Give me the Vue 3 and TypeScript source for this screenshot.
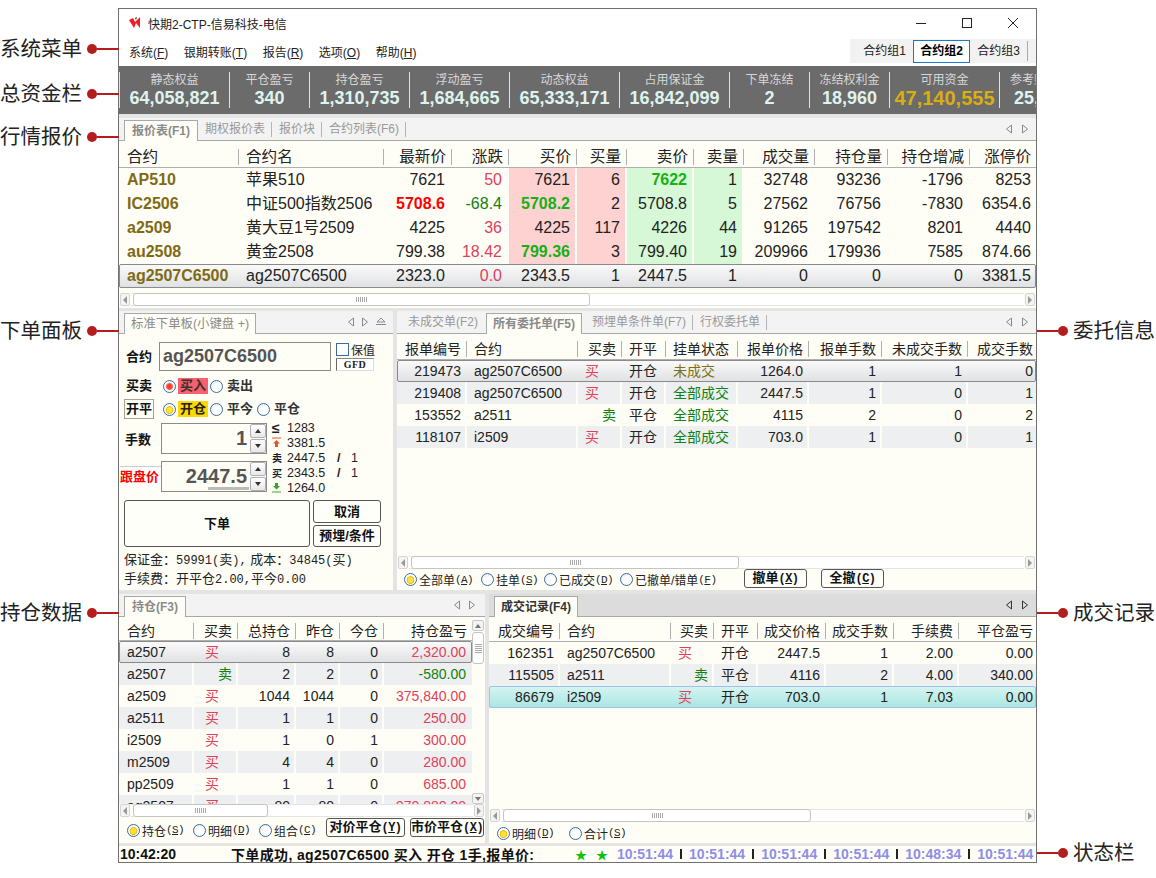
<script setup lang="ts">
type Cell = string | [string, string];

interface Col {
  title: string;
  w: number;
  left?: boolean;
}

interface GridRow {
  cells: Cell[];
  cls?: string;
}

function gridCols(cols: Col[]) {
  return cols.map((c) => c.w + "px").join(" ");
}

function text(c: Cell) {
  return typeof c === "string" ? c : c[0];
}

function cellClass(c: Cell, col: Col) {
  const own = typeof c === "string" ? "" : c[1];
  return [col.left ? "left" : "", own];
}

const callouts = [
  { label: "系统菜单", y: 49, side: "left" },
  { label: "总资金栏", y: 94, side: "left" },
  { label: "行情报价", y: 137, side: "left" },
  { label: "下单面板", y: 331, side: "left" },
  { label: "持仓数据", y: 613, side: "left" },
  { label: "委托信息", y: 331, side: "right" },
  { label: "成交记录", y: 613, side: "right" },
  { label: "状态栏", y: 853, side: "right" },
];

const menus = [
  { name: "系统", key: "F" },
  { name: "银期转账", key: "T" },
  { name: "报告", key: "R" },
  { name: "选项", key: "O" },
  { name: "帮助", key: "H" },
];

const funds = [
  { label: "静态权益", value: "64,058,821", w: 110 },
  { label: "平仓盈亏", value: "340", w: 80 },
  { label: "持仓盈亏", value: "1,310,735", w: 100 },
  { label: "浮动盈亏", value: "1,684,665", w: 100 },
  { label: "动态权益", value: "65,333,171", w: 110 },
  { label: "占用保证金", value: "16,842,099", w: 110 },
  { label: "下单冻结", value: "2", w: 80 },
  { label: "冻结权利金", value: "18,960", w: 80 },
  { label: "可用资金", value: "47,140,555", w: 110, gold: true },
];

const quoteCols: Col[] = [
  { title: "合约", w: 120, left: true },
  { title: "合约名", w: 145, left: true },
  { title: "最新价", w: 68 },
  { title: "涨跌", w: 57 },
  { title: "买价", w: 68 },
  { title: "买量", w: 50 },
  { title: "卖价", w: 67 },
  { title: "卖量", w: 50 },
  { title: "成交量", w: 71 },
  { title: "持仓量", w: 73 },
  { title: "持仓增减", w: 82 },
  { title: "涨停价", w: 66 },
];

function quote(
  code: string,
  name: string,
  last: Cell,
  chg: Cell,
  bid: Cell,
  bidVol: string,
  ask: Cell,
  askVol: string,
  ...rest: string[]
): Cell[] {
  const tag = (c: Cell, k: string): Cell => (typeof c === "string" ? [c, k] : [c[0], c[1] + " " + k]);
  return [[code, "code"], name, last, chg, tag(bid, "bid"), tag(bidVol, "bid"), tag(ask, "ask"), tag(askVol, "ask"), ...rest];
}

const quoteRows: GridRow[] = [
  { cells: quote("AP510", "苹果510", "7621", ["50", "up"], "7621", "6", ["7622", "hi-green"], "1", "32748", "93236", "-1796", "8253") },
  { cells: quote("IC2506", "中证500指数2506", ["5708.6", "hi-red"], ["-68.4", "down"], ["5708.2", "hi-green"], "2", "5708.8", "5", "27562", "76756", "-7830", "6354.6") },
  { cells: quote("a2509", "黄大豆1号2509", "4225", ["36", "up"], "4225", "117", "4226", "44", "91265", "197542", "8201", "4440") },
  { cells: quote("au2508", "黄金2508", "799.38", ["18.42", "up"], ["799.36", "hi-green"], "3", "799.40", "19", "209966", "179936", "7585", "874.66") },
  { cells: quote("ag2507C6500", "ag2507C6500", "2323.0", ["0.0", "up"], "2343.5", "1", "2447.5", "1", "0", "0", "0", "3381.5"), cls: "sel" },
];

const BUY: Cell = ["买", "left up"];
const SELL: Cell = ["卖", "down"];

const orderCols: Col[] = [
  { title: "报单编号", w: 70 },
  { title: "合约", w: 111, left: true },
  { title: "买卖", w: 44 },
  { title: "开平", w: 44, left: true },
  { title: "挂单状态", w: 72, left: true },
  { title: "报单价格", w: 71 },
  { title: "报单手数", w: 73 },
  { title: "未成交手数", w: 86 },
  { title: "成交手数", w: 68 },
];

const DONE: Cell = ["全部成交", "filled"];

const orderRows: GridRow[] = [
  { cells: ["219473", "ag2507C6500", BUY, "开仓", ["未成交", "pending"], "1264.0", "1", "1", "0"], cls: "sel" },
  { cells: ["219408", "ag2507C6500", BUY, "开仓", DONE, "2447.5", "1", "0", "1"], cls: "alt" },
  { cells: ["153552", "a2511", SELL, "平仓", DONE, "4115", "2", "0", "2"] },
  { cells: ["118107", "i2509", BUY, "开仓", DONE, "703.0", "1", "0", "1"], cls: "alt" },
];

const posCols: Col[] = [
  { title: "合约", w: 75, left: true },
  { title: "买卖", w: 44 },
  { title: "总持仓", w: 58 },
  { title: "昨仓", w: 44 },
  { title: "今仓", w: 44 },
  { title: "持仓盈亏", w: 88 },
];

const posRows: GridRow[] = [
  { cells: ["a2507", BUY, "8", "8", "0", ["2,320.00", "up"]], cls: "sel" },
  { cells: ["a2507", SELL, "2", "2", "0", ["-580.00", "down"]], cls: "alt" },
  { cells: ["a2509", BUY, "1044", "1044", "0", ["375,840.00", "up"]] },
  { cells: ["a2511", BUY, "1", "1", "0", ["250.00", "up"]], cls: "alt" },
  { cells: ["i2509", BUY, "1", "0", "1", ["300.00", "up"]] },
  { cells: ["m2509", BUY, "4", "4", "0", ["280.00", "up"]], cls: "alt" },
  { cells: ["pp2509", BUY, "1", "1", "0", ["685.00", "up"]] },
  { cells: ["ag2507", BUY, "80", "80", "0", ["970,880.00", "up"]], cls: "alt" },
];

const tradeCols: Col[] = [
  { title: "成交编号", w: 71 },
  { title: "合约", w: 111, left: true },
  { title: "买卖", w: 43 },
  { title: "开平", w: 44, left: true },
  { title: "成交价格", w: 68 },
  { title: "成交手数", w: 68 },
  { title: "手续费", w: 65 },
  { title: "平仓盈亏", w: 77 },
];

const tradeRows: GridRow[] = [
  { cells: ["162351", "ag2507C6500", BUY, "开仓", "2447.5", "1", "2.00", "0.00"] },
  { cells: ["115505", "a2511", SELL, "平仓", "4116", "2", "4.00", "340.00"], cls: "alt" },
  { cells: ["86679", "i2509", BUY, "开仓", "703.0", "1", "7.03", "0.00"], cls: "cyan" },
];

const orderFilters = [
  { name: "全部单", key: "A", on: true, cls: "f1" },
  { name: "挂单", key: "S", cls: "f2" },
  { name: "已成交", key: "D", cls: "f3" },
  { name: "已撤单/错单", key: "F", cls: "f4" },
];

const statusTimes = ["10:51:44", "10:51:44", "10:51:44", "10:51:44", "10:48:34", "10:51:44"];
</script>

<template>
  <div class="screen">
    <div v-for="c in callouts" :key="c.label" class="callout" :class="c.side" :style="{ top: c.y - 15 + 'px' }">
      <span class="callout-text">{{ c.label }}</span>
      <i class="callout-dot"></i>
      <i class="callout-line"></i>
    </div>

    <div class="window">
      <div class="titlebar">
        <svg class="logo" width="13" height="12" viewBox="0 0 13 12">
          <path d="M0 3 L4 1 L6 5 L11 0 V11 L7 6 L5 11 Z" fill="#ee1c25" />
          <path d="M6 1 L8 0 L7 3 Z" fill="#222" />
        </svg>
        <span class="title-text">快期2-CTP-信易科技-电信</span>
        <div class="win-btns">
          <svg width="12" height="12" viewBox="0 0 12 12"><path d="M1 6.5H11" stroke="#222" fill="none" /></svg>
          <svg width="12" height="12" viewBox="0 0 12 12"><rect x="1.5" y="1.5" width="9" height="9" stroke="#222" fill="none" /></svg>
          <svg width="12" height="12" viewBox="0 0 12 12"><path d="M1 1L11 11M11 1L1 11" stroke="#222" fill="none" /></svg>
        </div>
      </div>

      <div class="menubar">
        <span v-for="m in menus" :key="m.key" class="menu-item">{{ m.name }}(<u>{{ m.key }}</u>)</span>
        <div class="groups">
          <span class="group">合约组1</span>
          <span class="group active">合约组2</span>
          <span class="group last">合约组3</span>
        </div>
      </div>

      <div class="funds">
        <div v-for="f in funds" :key="f.label" class="fund" :style="{ width: f.w + 'px' }">
          <span class="fund-label">{{ f.label }}</span>
          <b class="fund-value" :class="{ gold: f.gold }">{{ f.value }}</b>
        </div>
        <div class="fund fund-cut">
          <span class="fund-label">参考账户资金</span>
          <b class="fund-value">25,340,555</b>
        </div>
      </div>

      <section class="panel quote-panel">
        <div class="tabstrip">
          <span class="tab active tab-quote">报价表<b>(F1)</b></span>
          <span class="tab">期权报价表</span>
          <span class="tab">报价块</span>
          <span class="tab">合约列表(F6)</span>
          <div class="tab-nav">
            <svg width="8" height="10" viewBox="0 0 8 10"><path d="M6.5 1 L1.5 5 L6.5 9 Z" /></svg>
            <svg width="8" height="10" viewBox="0 0 8 10"><path d="M1.5 1 L6.5 5 L1.5 9 Z" /></svg>
          </div>
        </div>
        <div class="grid big">
          <div class="thead" :style="{ gridTemplateColumns: gridCols(quoteCols) }">
            <div v-for="c in quoteCols" :key="c.title" class="th" :class="{ left: c.left }">{{ c.title }}</div>
          </div>
          <div v-for="(r, i) in quoteRows" :key="i" class="tr" :class="r.cls" :style="{ gridTemplateColumns: gridCols(quoteCols) }">
            <div v-for="(c, j) in r.cells" :key="j" class="td" :class="cellClass(c, quoteCols[j])">{{ text(c) }}</div>
          </div>
        </div>
        <div class="hscroll sb-quote">
          <span class="sb-btn"><i class="arr-l"></i></span>
          <div class="sb-track"><div class="sb-thumb"><i class="grip"></i></div></div>
          <span class="sb-btn"><i class="arr-r"></i></span>
        </div>
      </section>

      <div class="row-mid">
        <section class="panel form-panel">
          <div class="tabstrip">
            <span class="tab active tab-form">标准下单板(小键盘 +)</span>
            <div class="tab-nav nav-form">
              <svg width="8" height="10" viewBox="0 0 8 10"><path d="M6.5 1 L1.5 5 L6.5 9 Z" /></svg>
              <svg width="8" height="10" viewBox="0 0 8 10"><path d="M1.5 1 L6.5 5 L1.5 9 Z" /></svg>
              <svg width="12" height="10" viewBox="0 0 12 10"><path d="M6 1 L10 5 H2 Z M1 7.5 H11" /></svg>
            </div>
          </div>
          <div class="form">
            <div class="form-row r-contract">
              <b class="form-label">合约</b>
              <div class="contract-box">ag2507C6500</div>
              <div class="side">
                <label class="hedge"><i class="check"></i>保值</label>
                <div class="gfd">GFD</div>
              </div>
            </div>
            <div class="form-row r-side">
              <b class="form-label">买卖</b>
              <span class="opt"><i class="radio red"></i><em class="tag-buy">买入</em></span>
              <span class="opt"><i class="radio"></i><em>卖出</em></span>
            </div>
            <div class="form-row r-open">
              <b class="open-btn">开平</b>
              <span class="opt"><i class="radio on"></i><em class="tag-open">开仓</em></span>
              <span class="opt"><i class="radio"></i><em>平今</em></span>
              <span class="opt"><i class="radio"></i><em>平仓</em></span>
            </div>
            <div class="qty-block">
              <div class="qty-col">
                <div class="qty-row">
                  <b class="qty-label">手数</b>
                  <div class="spin">
                    <div class="spin-val">1</div>
                    <div class="spin-btns">
                      <span><i class="tri-up"></i></span>
                      <span><i class="tri-down"></i></span>
                    </div>
                  </div>
                </div>
                <div class="qty-row">
                  <b class="qty-label follow">跟盘价</b>
                  <div class="spin">
                    <div class="spin-val price">2447.5<i class="price-bar"></i></div>
                    <div class="spin-btns">
                      <span><i class="tri-up"></i></span>
                      <span><i class="tri-down"></i></span>
                    </div>
                  </div>
                </div>
              </div>
              <div class="levels">
                <div class="lv"><span class="lv-ic">≤</span><span class="lv-v">1283</span></div>
                <div class="lv">
                  <svg class="lv-svg" width="9" height="11" viewBox="0 0 9 11"><path d="M0 1H9" stroke="#e4572e" /><path d="M4.5 3 L8 6.5 H6 V10 H3 V6.5 H1 Z" fill="#e4572e" /></svg>
                  <span class="lv-v">3381.5</span>
                </div>
                <div class="lv"><b class="lv-ic small">卖</b><span class="lv-v">2447.5</span><b class="lv-slash">/</b><span class="lv-n">1</span></div>
                <div class="lv"><b class="lv-ic small">买</b><span class="lv-v">2343.5</span><b class="lv-slash">/</b><span class="lv-n">1</span></div>
                <div class="lv">
                  <svg class="lv-svg" width="9" height="11" viewBox="0 0 9 11"><path d="M4.5 7.5 L8 4 H6 V1 H3 V4 H1 Z" fill="#3aa52e" /><path d="M0 10H9" stroke="#3aa52e" /></svg>
                  <span class="lv-v">1264.0</span>
                </div>
              </div>
            </div>
            <div class="form-actions">
              <button class="btn place">下单</button>
              <div class="act-col">
                <button class="btn">取消</button>
                <button class="btn">预埋/条件</button>
              </div>
            </div>
            <div class="notes">
              <div>保证金：<span class="mn">59991(</span>卖<span class="mn">),</span> 成本：<span class="mn">34845(</span>买<span class="mn">)</span></div>
              <div>手续费：开平仓<span class="mn">2.00,</span>平今<span class="mn">0.00</span></div>
            </div>
          </div>
        </section>

        <section class="panel order-panel">
          <div class="tabstrip">
            <span class="tab first">未成交单(F2)</span>
            <span class="tab active tab-all">所有委托单<b>(F5)</b></span>
            <span class="tab">预埋单条件单(F7)</span>
            <span class="tab">行权委托单</span>
            <div class="tab-nav">
              <svg width="8" height="10" viewBox="0 0 8 10"><path d="M6.5 1 L1.5 5 L6.5 9 Z" /></svg>
              <svg width="8" height="10" viewBox="0 0 8 10"><path d="M1.5 1 L6.5 5 L1.5 9 Z" /></svg>
            </div>
          </div>
          <div class="grid small order-grid">
            <div class="thead" :style="{ gridTemplateColumns: gridCols(orderCols) }">
              <div v-for="c in orderCols" :key="c.title" class="th" :class="{ left: c.left }">{{ c.title }}</div>
            </div>
            <div v-for="(r, i) in orderRows" :key="i" class="tr" :class="r.cls" :style="{ gridTemplateColumns: gridCols(orderCols) }">
              <div v-for="(c, j) in r.cells" :key="j" class="td" :class="cellClass(c, orderCols[j])">{{ text(c) }}</div>
            </div>
          </div>
          <div class="hscroll sb-order">
            <span class="sb-btn"><i class="arr-l"></i></span>
            <div class="sb-track"><div class="sb-thumb"><i class="grip"></i></div></div>
            <span class="sb-btn"><i class="arr-r"></i></span>
          </div>
          <div class="toolbar order-tools">
            <span v-for="f in orderFilters" :key="f.key" class="filter" :class="f.cls">
              <i class="radio" :class="{ on: f.on }"></i>{{ f.name }}<span class="mk">(<u>{{ f.key }}</u>)</span>
            </span>
            <button class="btn tool-btn t-cancel">撤单<span class="mk">(<u>X</u>)</span></button>
            <button class="btn tool-btn t-all">全撤<span class="mk">(<u>C</u>)</span></button>
          </div>
        </section>
      </div>

      <div class="row-bottom">
        <section class="panel pos-panel">
          <div class="tabstrip">
            <span class="tab active tab-pos">持仓<b>(F3)</b></span>
            <div class="tab-nav nav-pos">
              <svg width="8" height="10" viewBox="0 0 8 10"><path d="M6.5 1 L1.5 5 L6.5 9 Z" /></svg>
              <svg width="8" height="10" viewBox="0 0 8 10"><path d="M1.5 1 L6.5 5 L1.5 9 Z" /></svg>
            </div>
          </div>
          <div class="pos-body">
            <div class="grid small pos-grid">
              <div class="thead" :style="{ gridTemplateColumns: gridCols(posCols) }">
                <div v-for="c in posCols" :key="c.title" class="th" :class="{ left: c.left }">{{ c.title }}</div>
              </div>
              <div v-for="(r, i) in posRows" :key="i" class="tr" :class="r.cls" :style="{ gridTemplateColumns: gridCols(posCols) }">
                <div v-for="(c, j) in r.cells" :key="j" class="td" :class="cellClass(c, posCols[j])">{{ text(c) }}</div>
              </div>
            </div>
            <div class="vscroll">
              <span class="vs-btn"><i class="tri-up"></i></span>
              <div class="vs-track"><div class="vs-thumb"><i class="grip-h"></i></div></div>
              <span class="vs-btn"><i class="tri-down"></i></span>
            </div>
          </div>
          <div class="hscroll sb-pos">
            <span class="sb-btn"><i class="arr-l"></i></span>
            <div class="sb-track"><div class="sb-thumb"><i class="grip"></i></div></div>
            <span class="sb-btn"><i class="arr-r"></i></span>
          </div>
          <div class="toolbar pos-tools">
            <span class="filter p1"><i class="radio on"></i>持仓<span class="mk">(<u>S</u>)</span></span>
            <span class="filter p2"><i class="radio"></i>明细<span class="mk">(<u>D</u>)</span></span>
            <span class="filter p3"><i class="radio"></i>组合<span class="mk">(<u>C</u>)</span></span>
            <button class="btn tool-btn b-close">对价平仓<span class="mk">(<u>Y</u>)</span></button>
            <button class="btn tool-btn b-market">市价平仓<span class="mk">(<u>X</u>)</span></button>
          </div>
        </section>

        <section class="panel trade-panel">
          <div class="tabstrip dark">
            <span class="tab active tab-trade">成交记录(F4)</span>
            <div class="tab-nav nav-dark">
              <svg width="8" height="10" viewBox="0 0 8 10"><path d="M6.5 1 L1.5 5 L6.5 9 Z" /></svg>
              <svg width="8" height="10" viewBox="0 0 8 10"><path d="M1.5 1 L6.5 5 L1.5 9 Z" /></svg>
            </div>
          </div>
          <div class="grid small trade-grid">
            <div class="thead" :style="{ gridTemplateColumns: gridCols(tradeCols) }">
              <div v-for="c in tradeCols" :key="c.title" class="th" :class="{ left: c.left }">{{ c.title }}</div>
            </div>
            <div v-for="(r, i) in tradeRows" :key="i" class="tr" :class="r.cls" :style="{ gridTemplateColumns: gridCols(tradeCols) }">
              <div v-for="(c, j) in r.cells" :key="j" class="td" :class="cellClass(c, tradeCols[j])">{{ text(c) }}</div>
            </div>
          </div>
          <div class="hscroll sb-trade">
            <span class="sb-btn"><i class="arr-l"></i></span>
            <div class="sb-track"><div class="sb-thumb"><i class="grip"></i></div></div>
            <span class="sb-btn"><i class="arr-r"></i></span>
          </div>
          <div class="toolbar trade-tools">
            <span class="filter d1"><i class="radio on"></i>明细<span class="mk">(<u>D</u>)</span></span>
            <span class="filter d2"><i class="radio"></i>合计<span class="mk">(<u>S</u>)</span></span>
          </div>
        </section>
      </div>

      <div class="statusbar">
        <b class="st-time">10:42:20</b>
        <b class="st-msg">下单成功, ag2507C6500 买入 开仓 1手,报单价:</b>
        <span class="st-star">★</span>
        <span class="st-star">★</span>
        <div class="st-times">
          <template v-for="(t, i) in statusTimes" :key="i">
            <i v-if="i > 0" class="st-sep"></i>
            <b>{{ t }}</b>
          </template>
        </div>
      </div>
    </div>
  </div>
</template>

<style scoped>
.screen {
  position: relative;
  width: 1156px;
  height: 878px;
  padding: 8px 0 0 118px;
  box-sizing: border-box;
  overflow: hidden;
  background: #fff;
  font-family: "Liberation Sans", "Noto Sans CJK SC", sans-serif;
  color: #222;
}

.callout {
  position: absolute;
  display: flex;
  align-items: center;
  height: 30px;
}
.callout.left {
  left: 0;
  width: 119px;
}
.callout.right {
  left: 1037px;
  width: 119px;
  flex-direction: row-reverse;
  justify-content: flex-end;
}
.callout-text {
  font-family: "Noto Sans CJK SC", sans-serif;
  font-size: 20.5px;
  color: #222;
  white-space: nowrap;
  margin-bottom: 4px;
}
.callout.left .callout-text {
  width: 87px;
}
.callout.right .callout-text {
  margin-left: 5px;
}
.callout-dot {
  width: 10px;
  height: 10px;
  border-radius: 50%;
  background: #b51d1d;
  flex: none;
}
.callout-line {
  height: 2px;
  background: #b51d1d;
  flex: none;
  width: 22px;
}
.callout.right .callout-line {
  width: 21px;
}

.window {
  width: 919px;
  height: 855px;
  box-sizing: border-box;
  border: 1px solid #707070;
  background: #e4e4e4;
  display: flex;
  flex-direction: column;
}

.titlebar {
  height: 28px;
  flex: none;
  display: flex;
  align-items: center;
  background: #fff;
  padding-left: 10px;
  font-size: 12px;
}
.logo {
  margin-right: 6px;
}
.title-text {
  color: #222;
}
.win-btns {
  margin-left: auto;
  display: flex;
  gap: 34px;
  margin-right: 17px;
}

.menubar {
  height: 29px;
  flex: none;
  display: flex;
  align-items: center;
  background: #fff;
  padding-left: 10px;
  font-size: 12px;
}
.menu-item {
  margin-right: 15.5px;
  color: #222;
}
.groups {
  margin-left: auto;
  display: flex;
  align-items: center;
  height: 24px;
  background: #f2f2f2;
  padding-left: 6px;
  margin-bottom: 1px;
  width: 186px;
  box-sizing: border-box;
}
.group {
  width: 57px;
  height: 23px;
  line-height: 23px;
  text-align: center;
  font-size: 12px;
  color: #222;
  flex: none;
}
.group.active {
  font-weight: 700;
  background: #fff;
  border: 1px solid #1a78c8;
  box-sizing: border-box;
  line-height: 21px;
  color: #000;
}
.group.last {
  border-right: 1px solid #aaa;
  height: 20px;
  line-height: 20px;
  width: 57px;
}

.funds {
  height: 48px;
  flex: none;
  display: flex;
  align-items: center;
  background: #6b6b6b;
  overflow: hidden;
}
.fund {
  height: 36px;
  flex: none;
  box-sizing: border-box;
  border-left: 1px solid #e2e2e2;
  display: flex;
  flex-direction: column;
  align-items: center;
  justify-content: flex-start;
  white-space: nowrap;
  overflow: hidden;
}
.fund-label {
  font-size: 12px;
  line-height: 16px;
  color: #d8d8d8;
}
.fund-value {
  font-size: 18px;
  line-height: 21px;
  color: #dff3ee;
}
.fund-value.gold {
  font-size: 20px;
  color: #d9ae12;
}
.fund-cut {
  flex: 1;
  min-width: 0;
  align-items: flex-start;
  padding-left: 10px;
}
.fund-cut .fund-value {
  margin-left: 4px;
}

.panel {
  display: flex;
  flex-direction: column;
  background: #fffef6;
  overflow: hidden;
}
.quote-panel {
  margin-top: 4px;
  height: 190px;
  flex: none;
}
.row-mid {
  margin-top: 3px;
  height: 279px;
  flex: none;
  display: flex;
  gap: 4px;
}
.form-panel {
  width: 274px;
  flex: none;
}
.order-panel {
  flex: 1;
  min-width: 0;
}
.row-bottom {
  margin-top: 4px;
  height: 249px;
  flex: none;
  display: flex;
  gap: 4px;
}
.pos-panel {
  width: 366px;
  flex: none;
}
.trade-panel {
  flex: 1;
  min-width: 0;
}

.tabstrip {
  height: 23px;
  flex: none;
  box-sizing: border-box;
  display: flex;
  align-items: flex-end;
  background: #f3f3f3;
  border-bottom: 1px solid #a8a8a8;
  padding-left: 5px;
  font-size: 12px;
}
.tabstrip.dark {
  background: #dcdcdc;
}
.tab {
  height: 15px;
  line-height: 15px;
  margin-bottom: 3px;
  padding: 0 6px 0 7px;
  color: #999;
  border-right: 1px solid #b4b4b4;
  white-space: nowrap;
}
.tab.first {
  border-right: none;
  padding: 0 8px 0 6px;
}
.tab.active {
  height: 21px;
  line-height: 20px;
  margin-bottom: -1px;
  box-sizing: border-box;
  background: #fffef6;
  border: 1px solid #a8a8a8;
  border-bottom: none;
  font-weight: 700;
  color: #8a8a8a;
}
.tab-quote {
  padding: 0 7px;
}
.tab-form {
  font-weight: 400 !important;
  font-size: 12.4px;
  padding: 0 6px !important;
}
.tab-all {
  padding: 0 6px !important;
  margin-right: 3px;
}
.tab-pos {
  padding: 0 7px;
}
.tab-trade {
  color: #333 !important;
  padding: 0 6px !important;
}
.tab b {
  font-weight: 700;
}
.tab-nav {
  margin-left: auto;
  display: flex;
  gap: 8px;
  align-items: center;
  align-self: center;
  padding-right: 7px;
}
.tab-nav svg {
  fill: none;
  stroke: #8a8a8a;
}
.nav-form {
  gap: 6px;
  padding-right: 6px;
}
.nav-pos {
  gap: 7px;
  padding-right: 9px;
}
.nav-dark svg {
  stroke: #333;
}

.grid {
  flex: 1;
  min-height: 0;
  overflow: hidden;
}
.thead {
  display: grid;
  align-items: center;
  border-bottom: 1px solid #b0b0b0;
  box-sizing: border-box;
}
.th {
  text-align: right;
  padding: 0 5px 0 6px;
  height: 16px;
  line-height: 16px;
  border-right: 1px solid #b0b0b0;
  color: #222;
  white-space: nowrap;
  overflow: hidden;
}
.th:last-child {
  border-right: none;
}
.th.left,
.td.left {
  text-align: left;
  padding-left: 7px;
}
.tr {
  display: grid;
  box-sizing: border-box;
  align-items: stretch;
}
.td {
  text-align: right;
  padding: 0 4px 0 6px;
  white-space: nowrap;
  overflow: hidden;
  border-right: 2px solid #fffef6;
  color: #222;
}
.td:last-child {
  border-right: none;
}
.tr.alt {
  background: #eeeff1;
}
.tr.sel {
  background: linear-gradient(#fbfbfb, #dfe0e2);
  outline: 1px solid #8a8a8a;
  outline-offset: -1px;
  border-radius: 2px;
}
.tr.sel .td {
  border-right-color: transparent;
  background: none !important;
}
.tr.cyan {
  background: linear-gradient(#d6f5f1, #a9e5e2);
  outline: 1px solid #9cc4e8;
  outline-offset: -1px;
  border-radius: 2px;
}
.tr.cyan .td {
  border-right-color: transparent;
}

.big {
  font-size: 16px;
}
.big .thead {
  height: 27px;
  padding-top: 6px;
}
.big .th {
  font-size: 15.6px;
}
.big .tr {
  height: 24px;
  line-height: 24px;
}
.big .td {
  padding-right: 5px;
}
.big .td.left:first-child,
.big .th.left:first-child {
  padding-left: 8px;
}
.small {
  font-size: 14px;
}
.small .tr {
  height: 22px;
  line-height: 22px;
}
.small .th {
  font-size: 14px;
}
.order-grid {
  flex: none;
  height: 222px;
}
.order-grid .thead {
  height: 26px;
  padding-top: 4px;
}
.order-grid .td:last-child,
.order-grid .th:last-child,
.trade-grid .td:last-child,
.trade-grid .th:last-child {
  padding-right: 3px;
}
.pos-grid .thead {
  height: 24px;
  padding-top: 4px;
}
.pos-grid .td:first-child,
.pos-grid .th:first-child {
  padding-left: 8px;
}
.pos-grid .td.left.up {
  padding-left: 11px;
}
.pos-grid .td:last-child {
  padding-right: 6px;
}
.trade-grid .thead {
  height: 25px;
  padding-top: 3px;
}

.td.code {
  font-weight: 700;
  color: #7f6a14;
}
.td.up {
  color: #e0405a;
}
.td.down {
  color: #108010;
}
.td.hi-red {
  font-weight: 700;
  color: #f00;
}
.td.hi-green {
  font-weight: 700;
  color: #16b016;
}
.td.bid {
  background: #ffd2d2;
}
.td.ask {
  background: #d6f8d6;
}
.td.filled {
  color: #108010;
}
.td.pending {
  color: #7f7010;
}

.hscroll {
  height: 13px;
  flex: none;
  display: flex;
  align-items: stretch;
  padding: 0 1px;
  margin-bottom: 1px;
}
.sb-quote {
  margin-bottom: 2px;
}
.sb-order {
  margin-bottom: 0;
}
.sb-btn {
  width: 10px;
  flex: none;
  display: flex;
  align-items: center;
  justify-content: center;
  box-sizing: border-box;
  background: #f4f4f4;
  border: 1px solid #d4d4d4;
  border-radius: 2px;
}
.arr-l {
  width: 0;
  height: 0;
  border: 4px solid transparent;
  border-left: none;
  border-right: 4px solid #999;
}
.arr-r {
  width: 0;
  height: 0;
  border: 4px solid transparent;
  border-right: none;
  border-left: 4px solid #999;
}
.sb-track {
  flex: 1;
  min-width: 0;
  margin: 0 1px;
  background: #fff;
  border-top: 1px solid #e4e4e4;
  border-bottom: 1px solid #e4e4e4;
  box-sizing: border-box;
  display: flex;
}
.sb-thumb {
  box-sizing: border-box;
  margin: -1px 0;
  margin-left: 2px;
  background: #fff;
  border: 1px solid #c4c4c4;
  border-radius: 3px;
  display: flex;
  align-items: center;
  justify-content: center;
}
.grip {
  width: 11px;
  height: 5px;
  background: repeating-linear-gradient(90deg, #aaa 0 1px, transparent 1px 2px);
}
.sb-quote .sb-thumb {
  width: 457px;
}
.sb-order .sb-thumb {
  width: 328px;
}
.sb-pos .sb-thumb {
  width: 135px;
}
.sb-trade .sb-thumb {
  width: 308px;
}

.vscroll {
  width: 12px;
  flex: none;
  display: flex;
  flex-direction: column;
  margin-top: 3px;
  gap: 1px;
}
.vs-btn {
  height: 11px;
  flex: none;
  box-sizing: border-box;
  background: #f4f4f4;
  border: 1px solid #c8c8c8;
  border-radius: 2px;
  display: flex;
  align-items: center;
  justify-content: center;
}
.vs-track {
  flex: 1;
  min-height: 0;
}
.vs-thumb {
  height: 32px;
  box-sizing: border-box;
  background: #fff;
  border: 1px solid #c4c4c4;
  border-radius: 3px;
  display: flex;
  align-items: center;
  justify-content: center;
}
.grip-h {
  width: 7px;
  height: 9px;
  background: repeating-linear-gradient(#aaa 0 1px, transparent 1px 2px);
}
.tri-up {
  width: 0;
  height: 0;
  border: 3px solid transparent;
  border-top: none;
  border-bottom: 4px solid #333;
}
.tri-down {
  width: 0;
  height: 0;
  border: 3px solid transparent;
  border-bottom: none;
  border-top: 4px solid #333;
}
.vs-btn .tri-up {
  border-bottom-color: #777;
}
.vs-btn .tri-down {
  border-top-color: #777;
}

.radio {
  display: inline-block;
  width: 13px;
  height: 13px;
  box-sizing: border-box;
  flex: none;
  border: 1px solid #3c6a9e;
  border-radius: 50%;
  background: radial-gradient(circle at 60% 65%, #fff 40%, #dfe6ee 100%);
}
.radio.on {
  background: radial-gradient(circle at 50% 55%, #ffe23c 0 2.5px, #e6b800 3.5px, #fff 4.2px);
}
.radio.red {
  background: radial-gradient(circle at 50% 50%, #ff3a2a 0 2px, #f08070 3.2px, #fff 4.2px);
}

.form {
  position: relative;
  flex: 1;
  min-height: 0;
  padding: 8px 0 0 5px;
  font-size: 13px;
}
.form-row {
  display: flex;
  align-items: center;
}
.form-label {
  width: 35px;
  flex: none;
  font-size: 13px;
  line-height: 16px;
  color: #111;
  margin-left: 2px;
}
.r-contract {
  height: 29px;
}
.contract-box {
  width: 172px;
  height: 29px;
  margin-left: -2px;
  box-sizing: border-box;
  border: 1px solid #8a8a8a;
  padding-left: 3px;
  line-height: 26px;
  font-size: 18px;
  font-weight: 700;
  color: #555;
}
.side {
  margin-left: 5px;
  width: 38px;
}
.hedge {
  display: flex;
  align-items: center;
  height: 14px;
  font-size: 12px;
  white-space: nowrap;
  color: #222;
}
.check {
  width: 13px;
  height: 13px;
  box-sizing: border-box;
  border: 1px solid #3c6a9e;
  background: #fff;
  margin-right: 2px;
  flex: none;
}
.gfd {
  margin-top: 2px;
  height: 13px;
  line-height: 12px;
  font-size: 10px;
  font-weight: 700;
  font-family: "Liberation Serif", serif;
  letter-spacing: 0.5px;
  text-align: center;
  background: #fff;
  border-left: 1px solid #666;
  border-top: 1px solid #888;
  border-right: 1px solid #ddd;
  border-bottom: 1px solid #ddd;
  box-sizing: border-box;
}
.opt {
  display: inline-flex;
  align-items: center;
}
.opt em {
  font-style: normal;
  font-weight: 700;
  color: #333;
  padding: 0 2px;
  height: 16px;
  line-height: 16px;
  margin-left: 2px;
}
.r-side {
  margin-top: 7px;
  height: 16px;
}
.r-side .form-label {
  width: 37px;
}
.r-side .opt,
.r-open .opt {
  margin-right: 2px;
}
.tag-buy {
  background: #f9606e;
  width: 30px;
  box-sizing: border-box;
}
.r-open {
  margin-top: 5px;
  height: 20px;
}
.open-btn {
  width: 30px;
  height: 20px;
  line-height: 18px;
  box-sizing: border-box;
  text-align: center;
  border: 1px solid #a8a090;
  margin-right: 9px;
  margin-left: 0;
  font-size: 13px;
  color: #111;
  flex: none;
}
.tag-open {
  background: #ffd800;
  width: 30px;
  box-sizing: border-box;
  color: #222 !important;
}
.qty-block {
  display: flex;
  margin-top: 4px;
}
.qty-col {
  display: flex;
  flex-direction: column;
  gap: 7px;
  flex: none;
}
.qty-row {
  display: flex;
  align-items: center;
  height: 31px;
}
.qty-label {
  width: 41px;
  box-sizing: border-box;
  padding-left: 5px;
  font-size: 13px;
  color: #111;
  flex: none;
  margin-left: -4px;
  white-space: nowrap;
}
.qty-label.follow {
  color: #f00;
  padding-left: 0;
  background: #fff;
  line-height: 20px;
  border-top: 1px solid #ccc;
}
.spin {
  width: 106px;
  height: 31px;
  box-sizing: border-box;
  border: 1px solid #8a8a8a;
  display: flex;
}
.spin-val {
  position: relative;
  flex: 1;
  text-align: right;
  font-size: 20px;
  font-weight: 700;
  color: #555;
  line-height: 29px;
  padding-right: 3px;
}
.price-bar {
  position: absolute;
  right: 1px;
  bottom: 1px;
  width: 41px;
  height: 3px;
  background: #bbb;
}
.spin-btns {
  width: 16px;
  flex: none;
  display: flex;
  flex-direction: column;
  gap: 1px;
}
.spin-btns span {
  flex: 1;
  box-sizing: border-box;
  border: 1px solid #b0b0b0;
  border-radius: 2px;
  background: linear-gradient(#fff, #e8e8e8);
  display: flex;
  align-items: center;
  justify-content: center;
}
.levels {
  margin: -3px 0 0 5px;
}
.lv {
  display: flex;
  align-items: center;
  height: 15px;
  font-size: 12.5px;
  color: #1a1a2a;
  white-space: nowrap;
}
.lv-ic {
  width: 15px;
  flex: none;
  font-size: 14px;
  font-weight: 700;
}
.lv-ic.small {
  font-size: 10px;
}
.lv-svg {
  width: 9px;
  margin-right: 6px;
  flex: none;
}
.lv-v {
  width: 47px;
  flex: none;
}
.lv-slash {
  width: 14px;
  flex: none;
  margin-left: 3px;
}
.lv-n {
  color: #223;
}
.form-actions {
  display: flex;
  gap: 3px;
  margin-top: 5px;
}
.btn {
  display: block;
  box-sizing: border-box;
  padding: 0;
  font-family: "Liberation Sans", "Noto Sans CJK SC", sans-serif;
  font-size: 13px;
  line-height: 15px;
  font-weight: 700;
  color: #111;
  background: #fffffa;
  border: 1px solid #555;
  border-radius: 3px;
  white-space: nowrap;
}
.place {
  width: 186px;
  height: 47px;
}
.act-col {
  display: flex;
  flex-direction: column;
  gap: 2px;
  width: 68px;
}
.act-col .btn {
  flex: 1;
  width: 68px;
}
.notes {
  margin-top: 4px;
  font-size: 13px;
  line-height: 18px;
  color: #222;
  white-space: pre;
}
.mn {
  font-family: "Liberation Mono", monospace;
  font-size: 12px;
}

.toolbar {
  position: relative;
  flex: 1;
  min-height: 0;
  display: flex;
  align-items: center;
  font-size: 12px;
}
.filter {
  display: inline-flex;
  align-items: center;
  white-space: nowrap;
  color: #222;
}
.filter .radio {
  margin-right: 2px;
}
.mk {
  font-family: "Liberation Mono", monospace;
  font-size: 11px;
  letter-spacing: -0.6px;
}
.btn .mk {
  font-size: 12px;
  letter-spacing: -0.5px;
}
.tool-btn {
  height: 19px;
  flex: none;
}
.order-tools {
  padding-left: 7px;
}
.order-tools .tool-btn {
  margin-bottom: 2px;
}
.f1 {
  width: 77px;
}
.f2 {
  width: 63px;
}
.f3 {
  width: 76px;
}
.f4 {
  width: 124px;
}
.t-cancel {
  width: 63px;
}
.t-all {
  width: 63px;
  margin-left: 14px;
}

.pos-body {
  flex: none;
  height: 187px;
  display: flex;
}
.pos-grid {
  width: 353px;
  flex: none;
}
.sb-pos {
  margin-bottom: 0;
}
.pos-tools {
  padding-left: 8px;
}
.pos-tools .tool-btn {
  margin-bottom: 5px;
}
.p1,
.p2 {
  width: 66px;
}
.p3 {
  width: 67px;
}
.b-close {
  width: 79px;
}
.b-market {
  width: 74px;
  margin-left: 5px;
}
.trade-grid {
  flex: none;
  height: 192px;
}
.trade-tools {
  padding-left: 8px;
}
.d1 {
  width: 72px;
}

.statusbar {
  margin-top: 3px;
  height: 16px;
  flex: none;
  display: flex;
  align-items: center;
  background: #fffef6;
  font-size: 14px;
  padding-left: 1px;
  white-space: nowrap;
  color: #111;
}
.st-time {
  width: 111px;
  flex: none;
}
.st-msg {
  width: 344px;
  flex: none;
  letter-spacing: 0.35px;
}
.st-star {
  color: #10c010;
  font-size: 12px;
  margin-right: 9px;
}
.st-times {
  display: flex;
  align-items: center;
  color: #8e8ee8;
}
.st-sep {
  width: 2px;
  height: 10px;
  background: #222;
  margin: 0 7px;
  flex: none;
}
</style>

<style>
html,
body {
  margin: 0;
  background: #fff;
}
</style>
